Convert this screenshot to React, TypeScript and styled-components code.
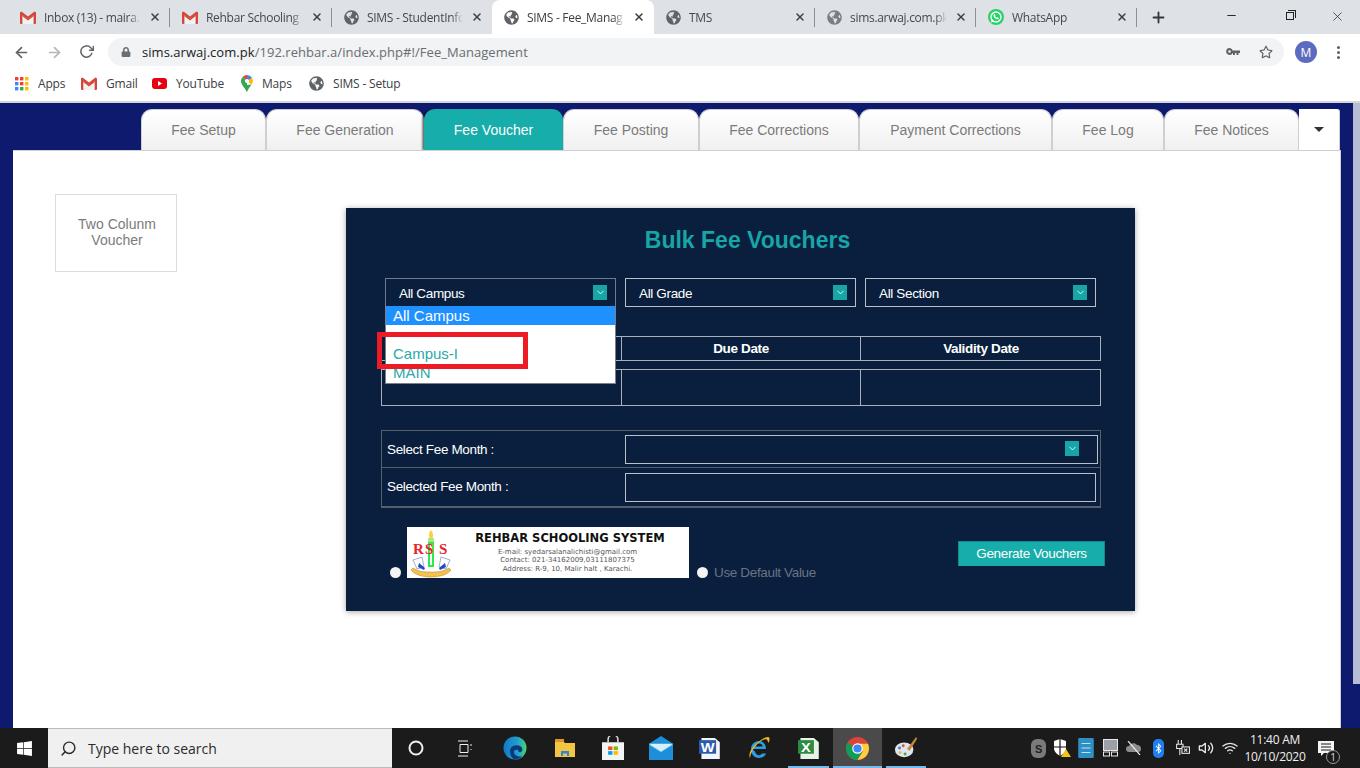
import React from 'react';
import styled, { createGlobalStyle } from 'styled-components';
import { FaGlobeAmericas, FaWindows, FaBluetoothB, FaRegStar, FaLock } from 'react-icons/fa';
import { FiArrowLeft, FiArrowRight, FiRotateCw, FiSearch, FiX, FiPlus, FiMinus, FiWifi, FiVolume2, FiChevronDown } from 'react-icons/fi';

const GlobalStyle = createGlobalStyle`
  html, body { margin: 0; padding: 0; overflow: hidden; }
  * { box-sizing: border-box; }
`;

const Screen = styled.div`
  width: 1360px;
  height: 768px;
  display: flex;
  flex-direction: column;
  font-family: 'Liberation Sans', Arial, sans-serif;
  background: #fff;
`;

/* browser chrome */
const TabStrip = styled.div`
  height: 34px;
  flex: none;
  background: #dee1e6;
  display: flex;
  align-items: stretch;
  padding-left: 8px;
  font-family: 'Open Sans', sans-serif;
  font-size: 12px;
  letter-spacing: -0.3px;
  color: #46484c;
`;

const BrowserTab = styled.div<{ $active?: boolean; $sep?: boolean; $w: number }>`
  position: relative;
  width: ${p => p.$w}px;
  flex: none;
  display: flex;
  align-items: center;
  padding: 0 9px 0 12px;
  gap: 8px;
  background: ${p => (p.$active ? '#fff' : 'transparent')};
  border-radius: ${p => (p.$active ? '8px 8px 0 0' : '0')};
  color: ${p => (p.$active ? '#3c4043' : '#46484c')};
  &::after {
    content: '';
    display: ${p => (p.$sep ? 'block' : 'none')};
    position: absolute;
    right: 0;
    top: 8px;
    bottom: 7px;
    width: 1px;
    background: #8e9095;
  }
`;

const TabTitle = styled.span`
  flex: 1;
  white-space: nowrap;
  overflow: hidden;
  -webkit-mask-image: linear-gradient(90deg, #000 88%, transparent 100%);
  mask-image: linear-gradient(90deg, #000 88%, transparent 100%);
`;

const TabClose = styled(FiX)`
  flex: none;
  color: #3c4043;
  stroke-width: 3;
  font-size: 12px;
`;

const NewTab = styled(FiPlus)`
  flex: none;
  margin: 9px 0 0 13px;
  font-size: 17px;
  stroke-width: 2.6;
  color: #35373a;
`;

const WindowButtons = styled.div`
  margin-left: auto;
  width: 150px;
  display: flex;
  justify-content: space-between;
  align-items: flex-start;
  padding: 9px 15px 0 15px;
  color: #2a2a2a;
`;

const RestoreIcon = styled.span`
  position: relative;
  width: 8px;
  height: 8px;
  margin: 3px 0 0 12px;
  border: 1px solid #222;
  &::before {
    content: '';
    position: absolute;
    top: -3px;
    right: -3px;
    width: 7px;
    height: 7px;
    border-top: 1px solid #222;
    border-right: 1px solid #222;
  }
`;

const Toolbar = styled.div`
  height: 36px;
  flex: none;
  display: flex;
  align-items: center;
  padding: 0 12px 0 13px;
  background: #fff;
  color: #5f6368;
`;

const NavIcons = styled.div`
  width: 95px;
  flex: none;
  display: flex;
  gap: 16px;
  font-size: 17px;
`;

const Omnibox = styled.div`
  width: 1176px;
  margin-left: 0;
  height: 28px;
  border-radius: 14px;
  background: #f1f3f4;
  display: flex;
  align-items: center;
  padding: 0 11px 0 13px;
  font-family: 'Open Sans', sans-serif;
  font-size: 13px;
  color: #6a6d71;
`;

const Host = styled.span`
  color: #202124;
`;

const UrlText = styled.span`
  margin-left: 11px;
  white-space: nowrap;
  letter-spacing: 0.04px;
`;

const OmniIcons = styled.div`
  margin-left: auto;
  display: flex;
  align-items: center;
  gap: 19px;
  color: #5f6368;
`;

const Avatar = styled.span`
  width: 22px;
  height: 22px;
  margin-left: 11px;
  border-radius: 50%;
  background: #5c6bc0;
  color: #fff;
  font-family: 'Open Sans', sans-serif;
  font-size: 12px;
  display: flex;
  align-items: center;
  justify-content: center;
  flex: none;
`;

const MenuDots = styled.span`
  margin-left: 20px;
  flex: none;
  width: 3px;
  height: 3px;
  border-radius: 50%;
  background: #5f6368;
  box-shadow: 0 -5px 0 #5f6368, 0 5px 0 #5f6368;
`;

const Bookmarks = styled.div`
  height: 33px;
  flex: none;
  display: flex;
  align-items: center;
  padding: 0 0 4px 15px;
  background: #fff;
  border-bottom: 2px solid #d4d6da;
  font-family: 'Open Sans', sans-serif;
  font-size: 12px;
  letter-spacing: -0.2px;
  color: #3c4043;
`;

const Bookmark = styled.span<{ $w: number }>`
  width: ${p => p.$w}px;
  flex: none;
  display: flex;
  align-items: center;
  gap: 9px;
  white-space: nowrap;
`;

/* page */
const Page = styled.div`
  flex: 1;
  min-height: 0;
  display: flex;
  background: #0e1a6e;
`;

const Scrollbar = styled.div`
  width: 7px;
  flex: none;
  height: 581px;
  background: #b8bdd6;
`;

const PageBody = styled.div`
  width: 1353px;
  flex: none;
  display: flex;
  flex-direction: column;
  padding: 6px 12px 0 13px;
`;

const SubTabs = styled.div`
  height: 41px;
  flex: none;
  display: flex;
  padding-left: 128px;
`;

const SubTab = styled.div<{ $w: number; $active?: boolean }>`
  width: ${p => p.$w}px;
  flex: none;
  display: flex;
  align-items: center;
  justify-content: center;
  font-size: 14px;
  border-radius: 11px 11px 0 0;
  color: ${p => (p.$active ? '#fff' : '#7b7b7b')};
  background: ${p => (p.$active ? '#17adaa' : 'linear-gradient(#ffffff, #f0f0f0)')};
  border: ${p => (p.$active ? 'none' : '1px solid #cfcfcf')};
  border-bottom: none;
  ${p => p.$active && 'box-shadow: -2px 0 2px rgba(0,0,0,.45);'}
`;

const CaretTab = styled.div`
  width: 41px;
  flex: none;
  display: flex;
  align-items: center;
  justify-content: center;
  background: #fff;
  border-radius: 0 3px 0 0;
  border-right: 1px solid #cfcfcf;
  &::before {
    content: '';
    border-left: 5px solid transparent;
    border-right: 5px solid transparent;
    border-top: 5px solid #333;
  }
`;

const ContentPanel = styled.div`
  flex: 1;
  min-height: 0;
  display: flex;
  align-items: flex-start;
  padding: 43px 0 0 42px;
  background: #fff;
  border-top: 1px solid #cfcfcf;
  border-right: 1px solid #cfcfcf;
`;

const ColumnCard = styled.div`
  width: 122px;
  height: 78px;
  flex: none;
  display: flex;
  align-items: center;
  justify-content: center;
  padding: 0 0 2px 2px;
  text-align: center;
  font-size: 14px;
  line-height: 16px;
  color: #7b7b7b;
  border: 1px solid #dcdcdc;
`;

const VoucherForm = styled.div`
  width: 789px;
  height: 403px;
  flex: none;
  margin: 14px 0 0 169px;
  display: flex;
  flex-direction: column;
  padding: 0 34px 0 35px;
  background: #0a1f3e;
  font-size: 13.500px;
  letter-spacing: -0.35px;
  box-shadow: 0 1px 6px rgba(0, 0, 0, 0.35);
`;

const FormTitle = styled.h2`
  margin: 19px 0 0;
  height: 26px;
  padding-left: 13px;
  text-align: center;
  font-size: 23px;
  line-height: 26px;
  font-weight: 700;
  letter-spacing: 0;
  color: #17a5a5;
`;

const SelectRow = styled.div`
  position: relative;
  margin: 25px 0 0 4px;
  display: flex;
  gap: 9px;
`;

const SelectBox = styled.div<{ $dim?: boolean }>`
  width: 231px;
  height: 29px;
  flex: none;
  display: flex;
  align-items: center;
  justify-content: space-between;
  padding: 2px 8px 0 13px;
  color: #fff;
  border: 1px solid ${p => (p.$dim ? '#6f7a8a' : '#b9c0ca')};
`;

const Chevron = styled.span`
  width: 14px;
  height: 15px;
  margin-top: -2px;
  flex: none;
  display: flex;
  align-items: center;
  justify-content: center;
  background: #17a5a5;
  color: #e8ffff;
  font-size: 11px;
`;

const DropdownList = styled.div`
  position: absolute;
  left: 0;
  top: 28px;
  width: 231px;
  height: 78px;
  z-index: 2;
  background: #fff;
  border: 1px solid #7a7f88;
  border-top: none;
  font-size: 15px;
  line-height: 19px;
  letter-spacing: 0;
`;

const DropdownOption = styled.div<{ $selected?: boolean; $h: number }>`
  height: ${p => p.$h}px;
  padding-left: 7px;
  display: flex;
  align-items: flex-end;
  color: ${p => (p.$selected ? '#fff' : '#2aa9ad')};
  background: ${p => (p.$selected ? '#1e90ff' : 'transparent')};
`;

const RedMark = styled.div`
  position: absolute;
  left: -8px;
  top: 54px;
  width: 151px;
  height: 37px;
  z-index: 3;
  border: 5px solid #ed1c24;
`;

const DateTable = styled.div`
  margin-top: 29px;
  display: flex;
  flex-direction: column;
  gap: 8px;
`;

const DateRow = styled.div<{ $h: number }>`
  height: ${p => p.$h}px;
  display: grid;
  grid-template-columns: 240px 239px 240px;
  width: 720px;
  border: 1px solid #a9b0bb;
`;

const DateCell = styled.div<{ $last?: boolean }>`
  display: flex;
  align-items: center;
  justify-content: center;
  font-weight: 700;
  color: #fff;
  border-right: ${p => (p.$last ? 'none' : '1px solid #a9b0bb')};
`;

const MonthTable = styled.div`
  margin-top: 24px;
  width: 720px;
  border: 1px solid #565f6e;
  border-bottom-width: 2px;
`;

const MonthRow = styled.div<{ $top?: boolean }>`
  height: ${p => (p.$top ? 37 : 38)}px;
  display: flex;
  align-items: center;
  color: #fff;
  ${p => p.$top && 'border-bottom: 1px solid #565f6e;'}
`;

const MonthLabel = styled.div<{ $raised?: boolean }>`
  width: 243px;
  height: 100%;
  flex: none;
  display: flex;
  align-items: center;
  padding: 0 0 ${p => (p.$raised ? 2 : 0)}px 5px;
`;

const MonthField = styled.div<{ $w: number }>`
  width: ${p => p.$w}px;
  height: 29px;
  flex: none;
  display: flex;
  align-items: center;
  justify-content: flex-end;
  padding-right: 18px;
  border: 1px solid #b9c0ca;
`;

const FooterRow = styled.div`
  margin: 19px -4px 0 0;
  display: flex;
  align-items: flex-start;
  padding-left: 9px;
`;

const Radio = styled.span`
  width: 11px;
  height: 11px;
  flex: none;
  margin-top: 40px;
  border-radius: 50%;
  background: #f4f4f4;
`;

const LogoBox = styled.div`
  width: 282px;
  height: 51px;
  flex: none;
  margin: 0 8px 0 6px;
  display: flex;
  align-items: center;
  padding-left: 3px;
  background: #fff;
`;

const LogoText = styled.div`
  flex: 1;
  padding-right: 10px;
  text-align: center;
  font-family: 'DejaVu Sans', sans-serif;
  font-size: 7px;
  line-height: 8.5px;
  letter-spacing: 0;
  color: #555;
`;

const LogoName = styled.div`
  font-family: 'DejaVu Sans', sans-serif;
  font-size: 11.500px;
  line-height: 13px;
  font-weight: 700;
  margin-bottom: 3px;
  color: #111;
  padding-left: 5px;
`;

const DefaultLabel = styled.span`
  margin: 38px 0 0 6px;
  color: #6b7280;
`;

const GenerateButton = styled.button`
  margin: 14px 0 0 auto;
  width: 147px;
  height: 25px;
  padding: 0 0 2px;
  border: 1px solid #128a8a;
  border-bottom: none;
  background: #17adaa;
  color: #fff;
  font-family: 'Liberation Sans', Arial, sans-serif;
  font-size: 13.500px;
  letter-spacing: -0.35px;
`;

/* windows taskbar */
const Taskbar = styled.div`
  height: 40px;
  flex: none;
  display: flex;
  align-items: center;
  background: #1b1b1b;
`;

const StartButton = styled.div`
  width: 48px;
  height: 100%;
  flex: none;
  display: flex;
  align-items: center;
  justify-content: center;
  color: #fff;
  font-size: 17px;
`;

const SearchBox = styled.div`
  width: 344px;
  height: 100%;
  flex: none;
  display: flex;
  align-items: center;
  gap: 11px;
  padding-left: 12px;
  background: #f0f0f0;
  border-top: 1px solid #bbb;
  border-bottom: 1px solid #bbb;
  font-family: 'Open Sans', sans-serif;
  font-size: 14px;
  color: #2b2b2b;
`;

const SearchGlyph = styled(FiSearch)`
  transform: scaleX(-1);
  font-size: 17px;
`;

const TaskIcons = styled.div`
  display: flex;
  height: 100%;
  flex: none;
`;

const TaskIcon = styled.div<{ $w: number; $active?: boolean; $open?: boolean }>`
  position: relative;
  width: ${p => p.$w}px;
  height: 100%;
  display: flex;
  align-items: center;
  justify-content: center;
  background: ${p => (p.$active ? '#4a4a4a' : 'transparent')};
  &::after {
    content: '';
    display: ${p => (p.$open ? 'block' : 'none')};
    position: absolute;
    left: ${p => (p.$active ? 0 : 4)}px;
    right: ${p => (p.$active ? 0 : 4)}px;
    bottom: 0;
    height: 2px;
    background: #76b9ed;
  }
`;

const Tray = styled.div`
  margin-left: auto;
  height: 100%;
  display: flex;
  align-items: center;
  padding-right: 14px;
  color: #e8e8e8;
  font-size: 16px;
`;

const TrayCell = styled.div`
  width: 24px;
  flex: none;
  display: flex;
  align-items: center;
  justify-content: center;
`;

const Clock = styled.div`
  width: 62px;
  margin-left: 2px;
  text-align: center;
  font-family: 'Open Sans', sans-serif;
  font-size: 12px;
  line-height: 17px;
  letter-spacing: -0.25px;
  color: #f0f0f0;
  white-space: nowrap;
`;

const Notification = styled.div`
  position: relative;
  width: 40px;
  height: 100%;
  display: flex;
  align-items: center;
  justify-content: center;
`;

const NotifyBadge = styled.span`
  position: absolute;
  right: 6px;
  bottom: 4px;
  width: 14px;
  height: 14px;
  border-radius: 50%;
  border: 1px solid #999;
  background: #1b1b1b;
  font-family: 'Open Sans', sans-serif;
  font-size: 10px;
  line-height: 12px;
  text-align: center;
  color: #ddd;
`;

const GmailIcon = () => (
  <svg width="16" height="13" viewBox="0 0 16 13">
    <path d="M0 1.5h2.6V13H1a1 1 0 0 1-1-1zM13.4 1.5H16V12a1 1 0 0 1-1 1h-1.6z" fill="#d44638" />
    <path d="M0 1.5 1.4.6 8 5.6 14.6.6 16 1.5v2L8 9 0 3.5z" fill="#d44638" />
    <path d="M2.6 4 8 8l5.4-4v9H2.6z" fill="#f2f2f2" />
    <path d="M2.6 3.6 8 7.8l5.4-4.2v1.6L8 9.4 2.6 5.2z" fill="#d44638" />
  </svg>
);

const Globe = styled(FaGlobeAmericas)<{ $light?: boolean }>`
  flex: none;
  font-size: 15px;
  color: ${p => (p.$light ? '#7a7c80' : '#5f6368')};
`;

const KeyIcon = () => (
  <svg width="14" height="9" viewBox="0 0 14 9">
    <path d="M3.500 0a3.500 3.500 0 0 1 3.300 2.500H14v2.500h-1.500v2h-2V5H9v2H7V5h-.2A3.500 3.500 0 1 1 3.500 0zm0 2.200a1.300 1.300 0 1 0 0 2.600 1.300 1.300 0 0 0 0-2.600z" fill="#5f6368" fillRule="evenodd" />
  </svg>
);

const WhatsAppIcon = () => (
  <svg width="16" height="16" viewBox="0 0 16 16">
    <circle cx="8" cy="8" r="8" fill="#25d366" />
    <circle cx="8" cy="8" r="5" fill="none" stroke="#fff" strokeWidth="1.4" />
    <path d="M3 13.4 3.8 10l2.6 2.6z" fill="#fff" />
    <path d="M6 5.2c-.9.9-.5 2.400.8 3.800 1.300 1.300 2.900 1.800 3.700.9l.2-.9-1.300-.7-.6.5c-.8-.3-1.400-1-1.800-1.800l.5-.6-.6-1.300z" fill="#fff" />
  </svg>
);

const AppsIcon = () => (
  <svg width="14" height="14" viewBox="0 0 14 14">
    {['#ea4335', '#ea4335', '#fbbc04', '#4285f4', '#ea4335', '#fbbc04', '#4285f4', '#34a853', '#fbbc04'].map((c, i) => (
      <rect key={i} x={(i % 3) * 5} y={Math.floor(i / 3) * 5} width="3.4" height="3.4" fill={c} />
    ))}
  </svg>
);

const YouTubeIcon = () => (
  <svg width="15" height="11" viewBox="0 0 15 11">
    <rect width="15" height="11" rx="3" fill="#e60012" />
    <path d="M6 3v5l4-2.500z" fill="#fff" />
  </svg>
);

const MapsIcon = () => (
  <svg width="12" height="17" viewBox="0 0 12 17">
    <path d="M6 17C4.500 13 0 10 0 6a6 6 0 0 1 1.800-4.200L6 6z" fill="#34a853" />
    <path d="M1.800 1.800A6 6 0 0 1 6 0l2 4-2 2z" fill="#ea4335" />
    <path d="M6 0a6 6 0 0 1 5 2.700L8 6 6 4z" fill="#4285f4" />
    <path d="M11 2.700C12.500 5.500 12 7.500 10.500 9.500L6 6z" fill="#fbbc04" />
    <path d="M6 17c-1-2.500-2.800-4.500-4-6.500L10.500 9.500C9 12 7 14 6 17z" fill="#34a853" />
    <circle cx="6" cy="6" r="2.100" fill="#fff" />
  </svg>
);

const RssEmblem = () => (
  <svg width="46" height="50" viewBox="0 0 46 50">
    <path d="M21 2c2 2 2.500 5 1.500 8h-3c-1-3-.5-6 1.500-8z" fill="#f5d33a" />
    <rect x="18" y="10" width="6" height="4" fill="#b6e08a" />
    <path d="M18 14h6v25h-6zM20 16v21h2V16z" fill="#2fe84a" fillRule="evenodd" />
    <path d="M3 32l9-3 2 10-7 2zM40 32l-9-3-2 10 7 2z" fill="#fff" stroke="#8d97c9" strokeWidth=".8" />
    <path d="M9 35l6 5-1 2-6-3zM35 35l-6 5 1 2 6-3z" fill="#1f49c8" />
    <path d="M3 40c6 4 12 4 18 4s12 0 18-4l2 2c-4 5-12 7-20 7S5 47 1 42z" fill="#f2c14e" stroke="#c88d2e" strokeWidth=".6" />
    <text x="3" y="26" fontFamily="Liberation Serif" fontWeight="700" fontSize="15" fill="#e3242b">R</text>
    <text x="15" y="26" fontFamily="Liberation Serif" fontWeight="700" fontSize="15" fill="#e3242b">S</text>
    <text x="29" y="26" fontFamily="Liberation Serif" fontWeight="700" fontSize="15" fill="#e3242b">S</text>
  </svg>
);

const WordIcon = () => (
  <svg width="22" height="23" viewBox="0 0 18 22" preserveAspectRatio="none">
    <path d="M2 1h11l4 4v16H2z" fill="#f2f5fb" />
    <rect y="3" width="14" height="13" fill="#2b5caa" />
    <text x="1.500" y="14" fontFamily="Liberation Sans" fontWeight="700" fontSize="12" fill="#fff">W</text>
  </svg>
);

const ExcelIcon = () => (
  <svg width="22" height="23" viewBox="0 0 18 22" preserveAspectRatio="none">
    <path d="M2 1h11l4 4v16H2z" fill="#e7f3e6" />
    <rect y="3" width="13" height="13" fill="#2e8b43" />
    <text x="2.500" y="14" fontFamily="Liberation Sans" fontWeight="700" fontSize="12" fill="#fff">X</text>
  </svg>
);

const EdgeIcon = () => (
  <svg width="24" height="24" viewBox="0 0 24 24">
    <defs>
      <linearGradient id="edgeBody" x1="0" y1="0" x2="1" y2="0">
        <stop offset="0" stopColor="#1378c8" />
        <stop offset="0.6" stopColor="#1f9ed0" />
        <stop offset="1" stopColor="#4ad66d" />
      </linearGradient>
    </defs>
    <circle cx="12" cy="12" r="11.500" fill="url(#edgeBody)" />
    <path d="M7 15c0-5 6-7 10-5 3 1.500 3 5 1 6-2 .8-3-.5-3-2-2-1-5 0-4 3 1 3 5 4 8 3-2 3-6 4-9 2.500C8 21 7 18 7 15z" fill="#0b3a78" />
  </svg>
);

const ExplorerIcon = () => (
  <svg width="22" height="20" viewBox="0 0 22 20">
    <path d="M1 3h8l2 2h10v14H1z" fill="#f4c542" />
    <rect x="1" y="1" width="9" height="3" fill="#d99a24" />
    <path d="M7 13h8v5h-2v-2.500H9V18H7z" fill="#2f86d6" />
  </svg>
);

const StoreIcon = () => (
  <svg width="22" height="24" viewBox="0 0 18 23" preserveAspectRatio="none">
    <path d="M5 6V3a4 4 0 0 1 8 0v3" fill="none" stroke="#d8d8d8" strokeWidth="1.300" />
    <path d="M0 6h18v17H0z" fill="#f4f4f4" />
    <rect x="5" y="10" width="3.500" height="3.500" fill="#f25022" />
    <rect x="9.500" y="10" width="3.500" height="3.500" fill="#7fba00" />
    <rect x="5" y="14.500" width="3.500" height="3.500" fill="#00a4ef" />
    <rect x="9.500" y="14.500" width="3.500" height="3.500" fill="#ffb900" />
  </svg>
);

const MailIcon = () => (
  <svg width="24" height="24" viewBox="0 0 20 22" preserveAspectRatio="none">
    <path d="M0 7l10-7 10 7v15H0z" fill="#1c8fd8" />
    <path d="M0 8l10 7 10-7" fill="#7ccdf5" />
    <path d="M0 7h20l-10 7z" fill="#d8f0fb" />
  </svg>
);

const IeIcon = () => (
  <svg width="22" height="24" viewBox="0 0 22 24">
    <path d="M4 13h14c0-5-3-8-7-8s-8 3-8 8c0 6 4 9 8 9 3 0 6-1.500 7-4.500h-4c-.7 1.200-1.800 1.800-3 1.800-2 0-3.500-1.500-3.800-3.500z M7 10.500c.3-1.800 2-3 4-3s3.500 1.200 3.700 3z" fill="#2b9fe0" fillRule="evenodd" />
    <path d="M2 22C-2 14 14 1 20 1c2.500 0 1.500 4 .5 6-1-2-1-3.800-2.500-3.800C13 3 3 13 2 22z" fill="#f0b723" />
  </svg>
);

const ChromeIcon = () => (
  <svg width="23" height="23" viewBox="0 0 24 24">
    <circle cx="12" cy="12" r="12" fill="#db4437" />
    <path d="M12 12 1.600 6A12 12 0 0 0 12 24l5-8z" fill="#0f9d58" />
    <path d="M12 7h10.900A12 12 0 0 1 12 24l5.500-9z" fill="#ffcd40" />
    <circle cx="12" cy="12" r="5.500" fill="#fff" />
    <circle cx="12" cy="12" r="4.300" fill="#4285f4" />
  </svg>
);

const PaintIcon = () => (
  <svg width="24" height="24" viewBox="0 0 26 26">
    <ellipse cx="11" cy="15" rx="10" ry="8" fill="#dfe6ee" />
    <circle cx="6" cy="13" r="1.600" fill="#3c7fd6" />
    <circle cx="10" cy="10.500" r="1.600" fill="#e24f3c" />
    <circle cx="6.500" cy="18" r="1.600" fill="#e8b83a" />
    <circle cx="12" cy="19.500" r="1.600" fill="#49a84b" />
    <path d="M24 1l1 2-8 13-3-2z" fill="#c58b3d" />
  </svg>
);

const SkypeTray = () => (
  <svg width="15" height="19" viewBox="0 0 15 19">
    <rect width="15" height="19" rx="6" fill="#7a7a7a" />
    <text x="4" y="14" fontFamily="Liberation Sans" fontWeight="700" fontSize="11" fill="#222">S</text>
  </svg>
);

const ShieldTray = () => (
  <svg width="18" height="18" viewBox="0 0 18 18">
    <path d="M1 2 7 0l6 2v7c0 4-3 6-6 8-3-2-6-4-6-8z" fill="#fff" />
    <path d="M7 0v17M1 8h12" stroke="#111" strokeWidth="1.200" />
    <path d="M13 10l5 8H8z" fill="#f5c518" />
  </svg>
);

const NetworkTray = () => (
  <svg width="16" height="20" viewBox="0 0 14 18">
    <rect width="14" height="18" rx="1" fill="#2f8fc4" />
    <path d="M3 5h8M3 9h8M3 13h8" stroke="#bfe6f7" />
  </svg>
);

const MonitorTray = () => (
  <svg width="15" height="18" viewBox="0 0 15 18">
    <rect x="0.500" y="0.500" width="14" height="11" fill="#9aa0a6" stroke="#e8e8e8" />
    <rect x="0.500" y="13" width="6" height="4" fill="none" stroke="#e8e8e8" />
    <rect x="8.500" y="13" width="6" height="4" fill="none" stroke="#e8e8e8" />
  </svg>
);

const CloudOffTray = () => (
  <svg width="16" height="14" viewBox="0 0 16 14">
    <path d="M3 11a3 3 0 0 1 0-6c1-3 6-4 8-1 3 0 4 2 4 4s-1 3-3 3z" fill="#8d8d8d" />
    <path d="M2 0l12 14" stroke="#e8e8e8" strokeWidth="1.200" />
  </svg>
);

const BluetoothTray = styled.span`
  width: 11px;
  height: 19px;
  border-radius: 5px;
  background: #1f7ff0;
  color: #fff;
  display: flex;
  align-items: center;
  justify-content: center;
  font-size: 11px;
`;

const PowerTray = () => (
  <svg width="15" height="16" viewBox="0 0 14 15" fill="none" stroke="#e8e8e8">
    <path d="M3 0v4M6 0v4M1.500 4h6v4h-6zM4.500 8v6" />
    <rect x="6.500" y="6.500" width="7" height="6" fill="#1b1b1b" />
    <path d="M8.500 8l3 3M11.500 8l-3 3" />
  </svg>
);

const ActionCenter = () => (
  <svg width="16" height="15" viewBox="0 0 16 15">
    <path d="M0 0h16v12H6l-3 3v-3H0z" fill="#f4f4f4" />
    <path d="M3 3h10M3 6h10M3 9h10" stroke="#1b1b1b" />
  </svg>
);

const chromeTabs = [
  { title: 'Inbox (13) - maira.', w: 162, icon: <GmailIcon />, sep: true },
  { title: 'Rehbar Schooling', w: 162, icon: <GmailIcon />, sep: true },
  { title: 'SIMS - StudentInfo', w: 160, icon: <Globe />, sep: false },
  { title: 'SIMS - Fee_Manag', w: 162, icon: <Globe />, active: true, sep: false },
  { title: 'TMS', w: 161, icon: <Globe />, sep: true },
  { title: 'sims.arwaj.com.pk', w: 161, icon: <Globe $light />, sep: true },
  { title: 'WhatsApp', w: 161, icon: <WhatsAppIcon />, sep: true },
];

const subTabs = [
  { label: 'Fee Setup', w: 125 },
  { label: 'Fee Generation', w: 158 },
  { label: 'Fee Voucher', w: 139, active: true },
  { label: 'Fee Posting', w: 136 },
  { label: 'Fee Corrections', w: 160 },
  { label: 'Payment Corrections', w: 193 },
  { label: 'Fee Log', w: 112 },
  { label: 'Fee Notices', w: 135 },
];

const taskApps = [
  { w: 50, icon: <EdgeIcon /> },
  { w: 49, icon: <ExplorerIcon /> },
  { w: 48, icon: <StoreIcon /> },
  { w: 48, icon: <MailIcon /> },
  { w: 49, icon: <WordIcon /> },
  { w: 50, icon: <IeIcon /> },
  { w: 49, icon: <ExcelIcon />, open: true },
  { w: 49, icon: <ChromeIcon />, open: true, active: true },
  { w: 48, icon: <PaintIcon />, open: true },
];

export default function App() {
  return (
    <Screen>
      <GlobalStyle />
      <TabStrip>
        {chromeTabs.map(t => (
          <BrowserTab key={t.title} $w={t.w} $active={t.active} $sep={t.sep}>
            {t.icon}
            <TabTitle>{t.title}</TabTitle>
            <TabClose />
          </BrowserTab>
        ))}
        <NewTab />
        <WindowButtons>
          <FiMinus size={13} />
          <RestoreIcon />
          <FiX size={15} strokeWidth={1.2} />
        </WindowButtons>
      </TabStrip>

      <Toolbar>
        <NavIcons>
          <FiArrowLeft strokeWidth={2.4} />
          <FiArrowRight strokeWidth={2.4} color="#b4b6b9" />
          <FiRotateCw strokeWidth={2.4} size={15} />
        </NavIcons>
        <Omnibox>
          <FaLock size={10} />
          <UrlText>
            <Host>sims.arwaj.com.pk</Host>/192.rehbar.a/index.php#!/Fee_Management
          </UrlText>
          <OmniIcons>
            <KeyIcon />
            <FaRegStar size={14} />
          </OmniIcons>
        </Omnibox>
        <Avatar>M</Avatar>
        <MenuDots />
      </Toolbar>

      <Bookmarks>
        <Bookmark $w={66}><AppsIcon />Apps</Bookmark>
        <Bookmark $w={71}><GmailIcon />Gmail</Bookmark>
        <Bookmark $w={89}><YouTubeIcon />YouTube</Bookmark>
        <Bookmark $w={68}><MapsIcon />Maps</Bookmark>
        <Bookmark $w={100}><Globe />SIMS - Setup</Bookmark>
      </Bookmarks>

      <Page>
        <PageBody>
          <SubTabs>
            {subTabs.map(t => (
              <SubTab key={t.label} $w={t.w} $active={t.active}>{t.label}</SubTab>
            ))}
            <CaretTab />
          </SubTabs>
          <ContentPanel>
            <ColumnCard>Two Colunm<br />Voucher</ColumnCard>
            <VoucherForm>
              <FormTitle>Bulk Fee Vouchers</FormTitle>
              <SelectRow>
                <SelectBox $dim>All Campus<Chevron><FiChevronDown /></Chevron></SelectBox>
                <SelectBox>All Grade<Chevron><FiChevronDown /></Chevron></SelectBox>
                <SelectBox>All Section<Chevron><FiChevronDown /></Chevron></SelectBox>
                <DropdownList>
                  <DropdownOption $selected $h={19}>All Campus</DropdownOption>
                  <DropdownOption $h={38}>Campus-I</DropdownOption>
                  <DropdownOption $h={19}>MAIN</DropdownOption>
                </DropdownList>
                <RedMark />
              </SelectRow>
              <DateTable>
                <DateRow $h={25}>
                  <DateCell />
                  <DateCell>Due Date</DateCell>
                  <DateCell $last>Validity Date</DateCell>
                </DateRow>
                <DateRow $h={37}>
                  <DateCell />
                  <DateCell />
                  <DateCell $last />
                </DateRow>
              </DateTable>
              <MonthTable>
                <MonthRow $top>
                  <MonthLabel>Select Fee Month :</MonthLabel>
                  <MonthField $w={473}><Chevron><FiChevronDown /></Chevron></MonthField>
                </MonthRow>
                <MonthRow>
                  <MonthLabel $raised>Selected Fee Month :</MonthLabel>
                  <MonthField $w={471} />
                </MonthRow>
              </MonthTable>
              <FooterRow>
                <Radio />
                <LogoBox>
                  <RssEmblem />
                  <LogoText>
                    <LogoName>REHBAR SCHOOLING SYSTEM</LogoName>
                    E-mail: syedarsalanalichisti@gmail.com<br />
                    Contact: 021-34162009,03111807375<br />
                    Address: R-9, 10, Malir halt , Karachi.
                  </LogoText>
                </LogoBox>
                <Radio />
                <DefaultLabel>Use Default Value</DefaultLabel>
                <GenerateButton>Generate Vouchers</GenerateButton>
              </FooterRow>
            </VoucherForm>
          </ContentPanel>
        </PageBody>
        <Scrollbar />
      </Page>

      <Taskbar>
        <StartButton><FaWindows /></StartButton>
        <SearchBox><SearchGlyph />Type here to search</SearchBox>
        <TaskIcons>
          <TaskIcon $w={47}>
            <svg width="16" height="16" viewBox="0 0 16 16"><circle cx="8" cy="8" r="6.500" fill="none" stroke="#f0f0f0" strokeWidth="2" /></svg>
          </TaskIcon>
          <TaskIcon $w={51}>
            <svg width="16" height="17" viewBox="0 0 16 17" fill="none" stroke="#f0f0f0">
              <path d="M1 1h10M3 4.500h8v8H3zM1 16h10M14 4v2M14 9v1" />
            </svg>
          </TaskIcon>
          {taskApps.map((a, i) => (
            <TaskIcon key={i} $w={a.w} $open={a.open} $active={a.active}>{a.icon}</TaskIcon>
          ))}
        </TaskIcons>
        <Tray>
          <TrayCell><SkypeTray /></TrayCell>
          <TrayCell><ShieldTray /></TrayCell>
          <TrayCell><NetworkTray /></TrayCell>
          <TrayCell><MonitorTray /></TrayCell>
          <TrayCell><CloudOffTray /></TrayCell>
          <TrayCell><BluetoothTray><FaBluetoothB /></BluetoothTray></TrayCell>
          <TrayCell><PowerTray /></TrayCell>
          <TrayCell><FiVolume2 /></TrayCell>
          <TrayCell><FiWifi /></TrayCell>
          <Clock>11:40 AM<br />10/10/2020</Clock>
          <Notification>
            <ActionCenter />
            <NotifyBadge>1</NotifyBadge>
          </Notification>
        </Tray>
      </Taskbar>
    </Screen>
  );
}
